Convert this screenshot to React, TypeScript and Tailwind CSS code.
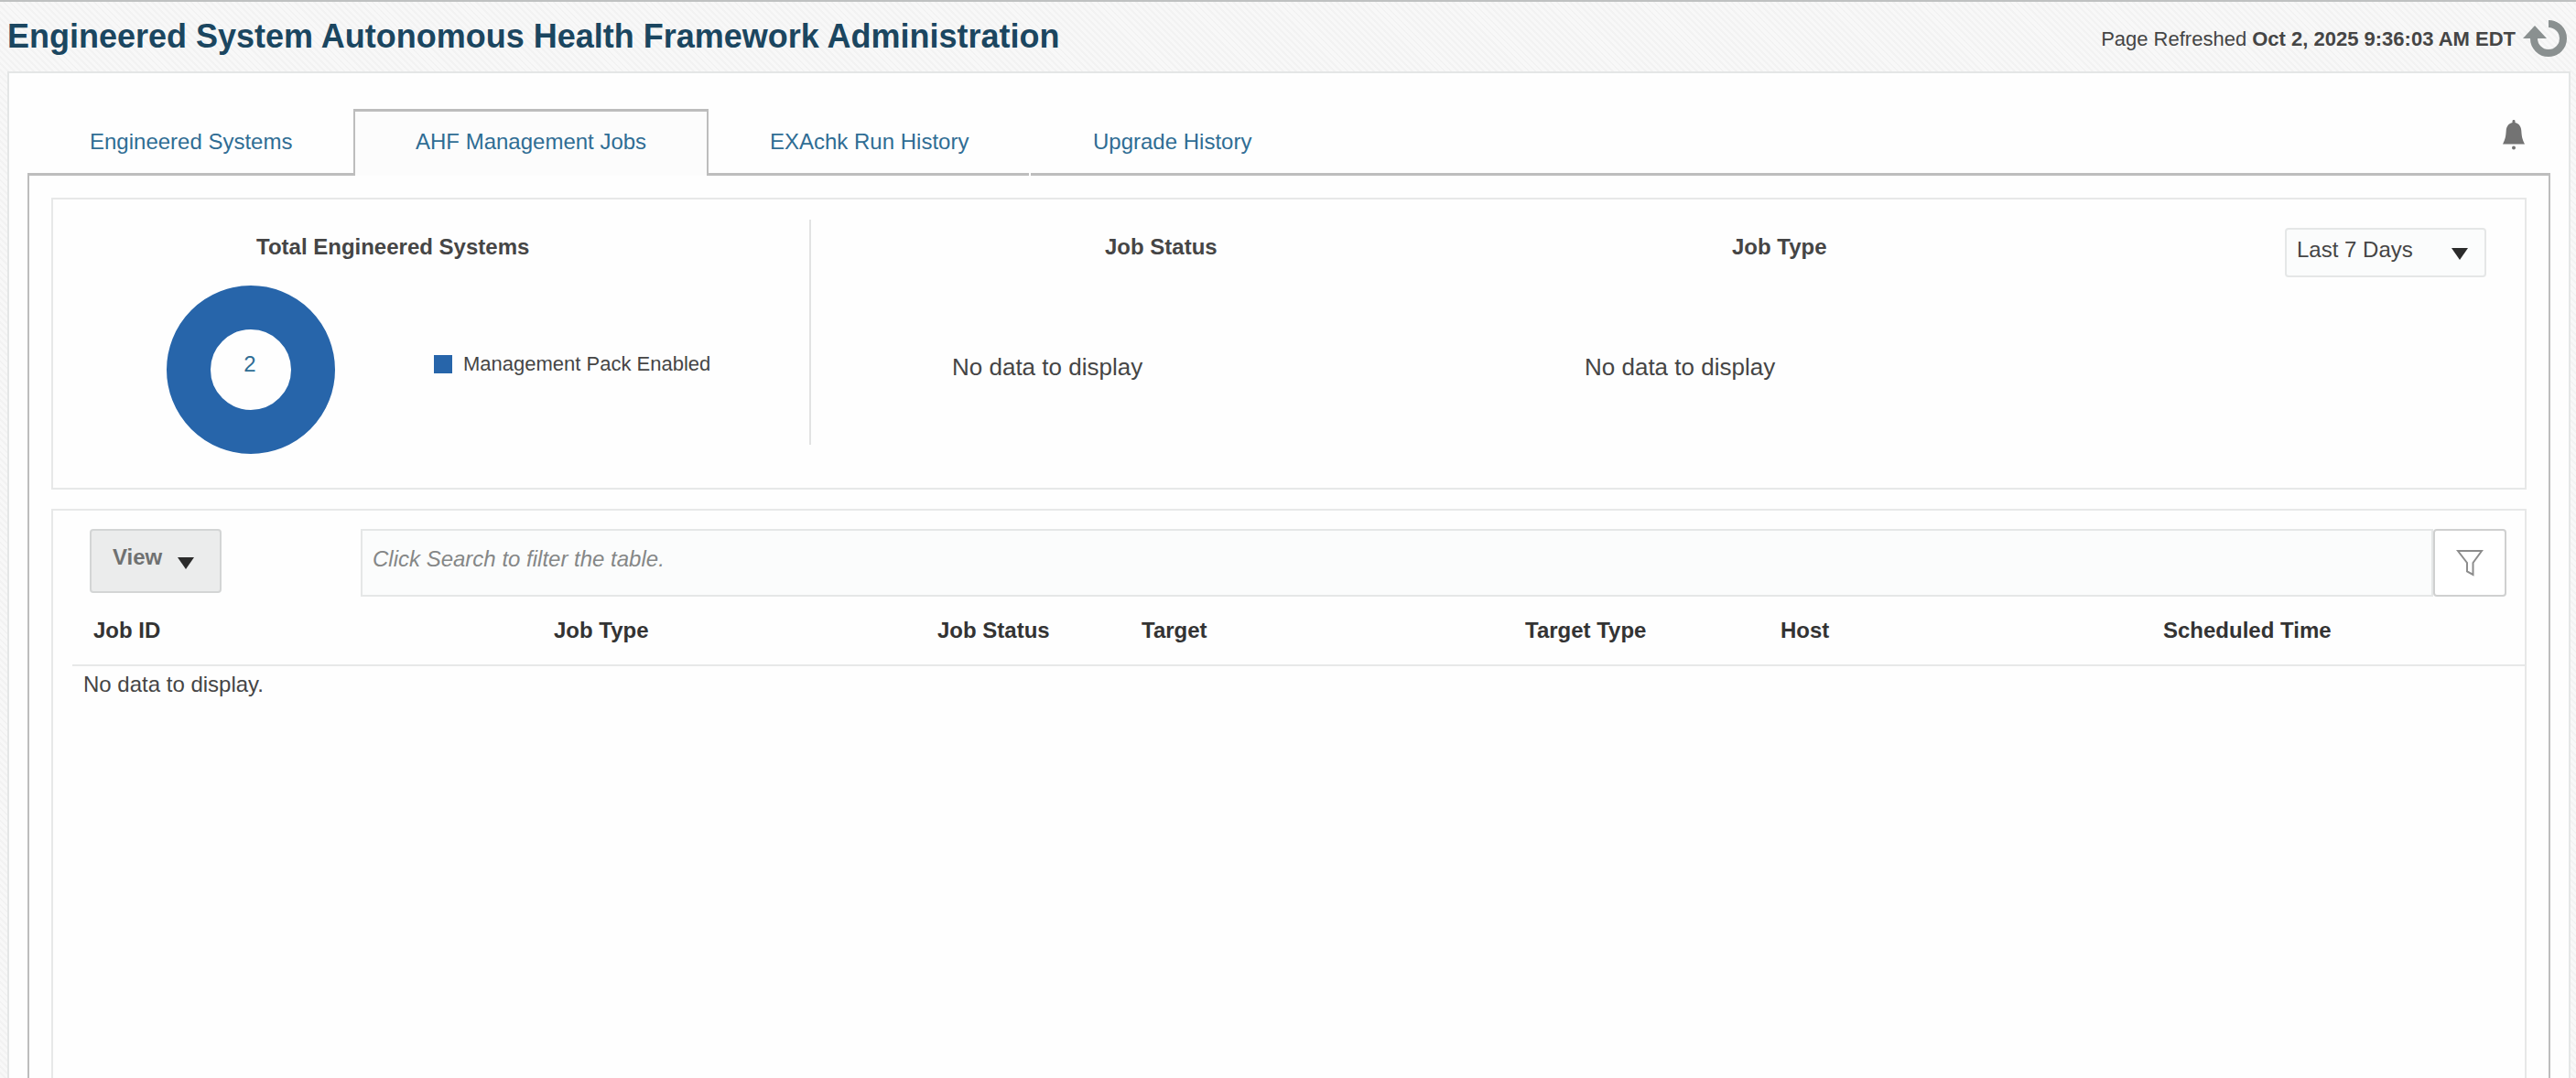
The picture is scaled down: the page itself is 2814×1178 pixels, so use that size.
import React from "react";

const tabs = [
  { label: "Engineered Systems", width: "w-[356px] pl-[68px]" },
  { label: "AHF Management Jobs", width: "w-[388px] pl-[66px]", active: true },
  { label: "EXAchk Run History", width: "mr-0.5 w-[350px] pl-[67px]" },
  { label: "Upgrade History", width: "flex-1 pl-[68px]" },
];

const columns = [
  { label: "Job ID", width: "w-[503px] pl-[23px]" },
  { label: "Job Type", width: "w-[419px] pl-[23px]" },
  { label: "Job Status", width: "w-[223px] pl-[23px]" },
  { label: "Target", width: "w-[419px] pl-[23px]" },
  { label: "Target Type", width: "w-[279px] pl-[23px]" },
  { label: "Host", width: "w-[418px] pl-[23px]" },
  { label: "Scheduled Time", width: "pl-[23px]" },
];

function Triangle() {
  return (
    <svg width="18" height="13" viewBox="0 0 18 13" fill="#2b2b2b" aria-hidden="true">
      <path d="M0 0H18L9 13Z" />
    </svg>
  );
}

function RefreshIcon() {
  return (
    <svg width="48" height="48" viewBox="0 0 48 48" aria-hidden="true">
      <path d="M28 8A16 16 0 1 1 12 24" fill="none" stroke="#8a9090" strokeWidth="8" />
      <path d="M0 24L13 10L26 24Z" fill="#8a9090" />
    </svg>
  );
}

function BellIcon() {
  return (
    <svg width="24" height="33" viewBox="0 0 24 33" fill="#737373" aria-hidden="true">
      <path d="M10.500 1.500C10.500 0.500 11 0 12 0S13.500 0.500 13.500 1.500V3C18 4 20 7.500 20.300 12C20.700 18 21.200 21 24 26.500H0C2.800 21 3.300 18 3.700 12C4 7.500 6 4 10.500 3Z" />
      <circle cx="12" cy="30.500" r="2" />
    </svg>
  );
}

function FunnelIcon() {
  return (
    <svg width="30" height="30" viewBox="0 0 30 30" fill="none" stroke="#8c8c8c" strokeWidth="2" aria-hidden="true">
      <path d="M2 2H28L18.500 15V28L12 24.500V15Z" />
    </svg>
  );
}

function EmptyChart({ title, titlePad }: { title: string; titlePad: string }) {
  return (
    <section>
      <h2 className={`${titlePad} text-2xl font-bold`}>{title}</h2>
      <p className="mt-[99px] text-[26px] leading-8">No data to display</p>
    </section>
  );
}

export default function App() {
  return (
    <div className="flex min-h-screen flex-col border-t-2 border-[#bfc1c1] bg-[repeating-linear-gradient(45deg,#f8f8f8_0px,#f8f8f8_3px,#f2f2f2_3px,#f2f2f2_5px)] pl-2 pr-1.5 font-['Liberation_Sans',Arial,sans-serif] text-[#454545]">
      <header className="flex h-[76px] items-center justify-between pr-1">
        <h1 className="text-4xl font-bold text-[#1b4660]">
          Engineered System Autonomous Health Framework Administration
        </h1>
        <div className="flex items-center gap-2 pt-1">
          <p className="text-[22px]">
            Page Refreshed <b>Oct 2, 2025 9:36:03 AM EDT</b>
          </p>
          <button type="button" aria-label="Refresh page">
            <RefreshIcon />
          </button>
        </div>
      </header>

      <main className="flex flex-1 flex-col border-x-2 border-t-2 border-[#e4e6e6] bg-[#fefefe] px-5 pt-[39px]">
        <div className="flex justify-between">
          <nav role="tablist" className="flex flex-1">
            {tabs.map((t) => (
              <button
                key={t.label}
                type="button"
                role="tab"
                aria-selected={!!t.active}
                className={`${t.width} h-[73px] text-left text-2xl text-[#2f6d94] ${
                  t.active
                    ? "border-x-2 border-t-[3px] border-[#bdbdbd] bg-[#fcfcfc] pb-1"
                    : "border-b-[3px] border-[#bdbdbd] pt-0.5"
                }`}
              >
                {t.label}
              </button>
            ))}
          </nav>
          <div className="flex w-[52px] justify-start border-b-[3px] border-[#bdbdbd] pt-3">
            <button type="button" aria-label="Notifications" className="h-[33px]">
              <BellIcon />
            </button>
          </div>
        </div>

        <div role="tabpanel" className="flex flex-1 flex-col border-x-2 border-[#bdbdbd] px-6 pt-6">
          <div className="flex h-[319px] border-2 border-[#e7e8e8] pt-[22px]">
            <section className="h-[246px] w-[828px] border-r-2 border-[#e2e3e3] pt-3.5">
              <h2 className="pl-[222px] text-2xl font-bold">Total Engineered Systems</h2>
              <div className="flex items-start pl-[124px] pt-[26px]">
                <svg width="184" height="184" viewBox="0 0 184 184" role="img" aria-label="2 systems">
                  <circle cx="92" cy="92" r="68" fill="none" stroke="#2765aa" strokeWidth="48" />
                  <text x="91" y="94" textAnchor="middle" fontSize="24" fill="#2f6d94">
                    2
                  </text>
                </svg>
                <div className="flex items-center gap-3 pl-[108px] pt-[70px]">
                  <span className="size-5 bg-[#2765aa]" />
                  <span className="text-[22px] leading-8">Management Pack Enabled</span>
                </div>
              </div>
            </section>
            <div className="flex flex-1 pl-[154px] pt-3.5">
              <div className="w-[691px]">
                <EmptyChart title="Job Status" titlePad="pl-[167px]" />
              </div>
              <EmptyChart title="Job Type" titlePad="pl-[161px]" />
            </div>
            <div className="relative mr-[42px] mt-[9px] h-[54px] w-[220px]">
              <select
                aria-label="Time range"
                className="h-full w-full appearance-none rounded-sm border-2 border-[#e5e7e7] bg-[#fbfcfc] pb-1.5 pl-[11px] text-2xl"
              >
                <option>Last 7 Days</option>
              </select>
              <span className="pointer-events-none absolute right-5 top-[22px]">
                <Triangle />
              </span>
            </div>
          </div>

          <div className="mt-[21px] flex flex-1 flex-col border-x-2 border-t-2 border-[#e7e8e8] pt-5">
            <div className="flex pl-10 pr-5">
              <button
                type="button"
                className="mr-[152px] flex h-[70px] w-36 gap-[17px] rounded-sm border-2 border-[#d3d5d5] bg-[#ebecec] pl-[23px] pt-[13px] text-2xl font-bold text-[#6f7171]"
              >
                View
                <span className="mt-4">
                  <Triangle />
                </span>
              </button>
              <input
                aria-label="Filter the table"
                placeholder="Click Search to filter the table."
                className="h-[74px] flex-1 border-2 border-[#e5e7e7] bg-[#fbfcfc] pb-2 pl-[11px] text-2xl italic placeholder:text-[#858787]"
              />
              <button
                type="button"
                aria-label="Search"
                className="flex h-[74px] w-20 items-center justify-center rounded-sm border-2 border-[#cfd0d0] bg-white"
              >
                <FunnelIcon />
              </button>
            </div>
            <div className="pl-[21px]">
              <table className="w-full table-fixed text-left text-2xl">
                <thead className="text-[#333]">
                  <tr className="h-[75px] border-b-2 border-[#e7e8e8]">
                    {columns.map((c) => (
                      <th key={c.label} scope="col" className={`${c.width} font-bold`}>
                        {c.label}
                      </th>
                    ))}
                  </tr>
                </thead>
                <tbody>
                  <tr>
                    <td colSpan={7} className="pl-3 pt-1">
                      No data to display.
                    </td>
                  </tr>
                </tbody>
              </table>
            </div>
          </div>
        </div>
      </main>
    </div>
  );
}
